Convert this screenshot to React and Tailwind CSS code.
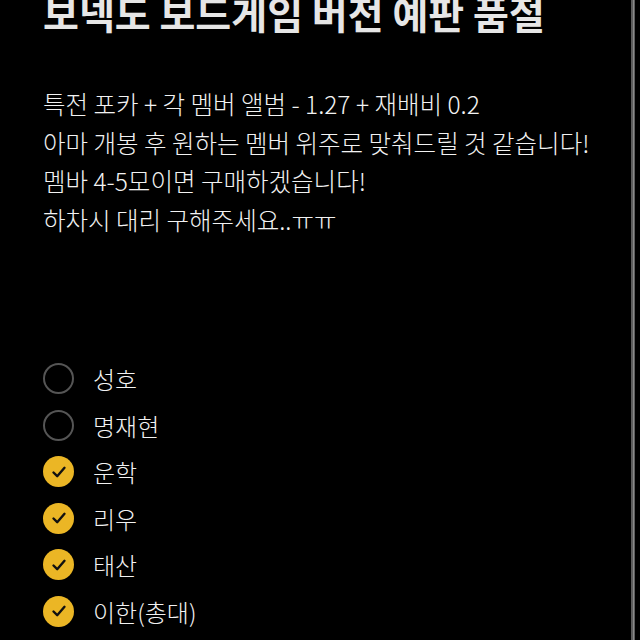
import React from "react";

const items = [
  { name: "성호", checked: false },
  { name: "명재현", checked: false },
  { name: "운학", checked: true },
  { name: "리우", checked: true },
  { name: "태산", checked: true },
  { name: "이한(총대)", checked: true },
];

function Circle({ checked }) {
  if (checked) {
    return (
      <div className="w-[31px] h-[31px] rounded-full bg-[#ebb625] flex items-center justify-center shrink-0">
        <svg width="18" height="18" viewBox="0 0 18 18" fill="none">
          <path d="M3.5 9.5 L7.2 13.2 L14.5 4.8" stroke="#111" strokeWidth="2.4" strokeLinecap="round" strokeLinejoin="round" />
        </svg>
      </div>
    );
  }
  return <div className="w-[31px] h-[31px] rounded-full border-2 border-[#555555] shrink-0" />;
}

export default function App() {
  const font = { fontFamily: '"Noto Sans CJK KR", "Noto Sans", sans-serif' };
  return (
    <div className="relative w-[640px] h-[640px] bg-black overflow-hidden" style={font}>
      <div className="pl-[43px] pr-[12px]">
        <div className="mt-[-11px] text-[39px] leading-[46px] font-bold text-[#e6e6e6] whitespace-nowrap">
          보넥도 보드게임 버전 예판 품절
        </div>
        <div className="mt-[50px] text-[24.5px] leading-[38.5px] font-light text-[#f2f2f2] whitespace-nowrap">
          <div>특전 포카 + 각 멤버 앨범 - 1.27 + 재배비 0.2</div>
          <div>아마 개봉 후 원하는 멤버 위주로 맞춰드릴 것 같습니다!</div>
          <div>멤바 4-5모이면 구매하겠습니다!</div>
          <div>하차시 대리 구해주세요..ㅠㅠ</div>
        </div>
        <div className="mt-[124px] flex flex-col gap-[15.6px]">
          {items.map((it) => (
            <div key={it.name} className="flex items-center gap-[19px] h-[31px]">
              <Circle checked={it.checked} />
              <span className="text-[24px] font-light text-[#f2f2f2] leading-[31px]">{it.name}</span>
            </div>
          ))}
        </div>
      </div>
      <div className="absolute top-0 right-[5px] w-[4px] h-full bg-[#5c5c5c] flex justify-center">
        <div className="w-[1px] h-full bg-[#8a8a8a]" />
      </div>
    </div>
  );
}
